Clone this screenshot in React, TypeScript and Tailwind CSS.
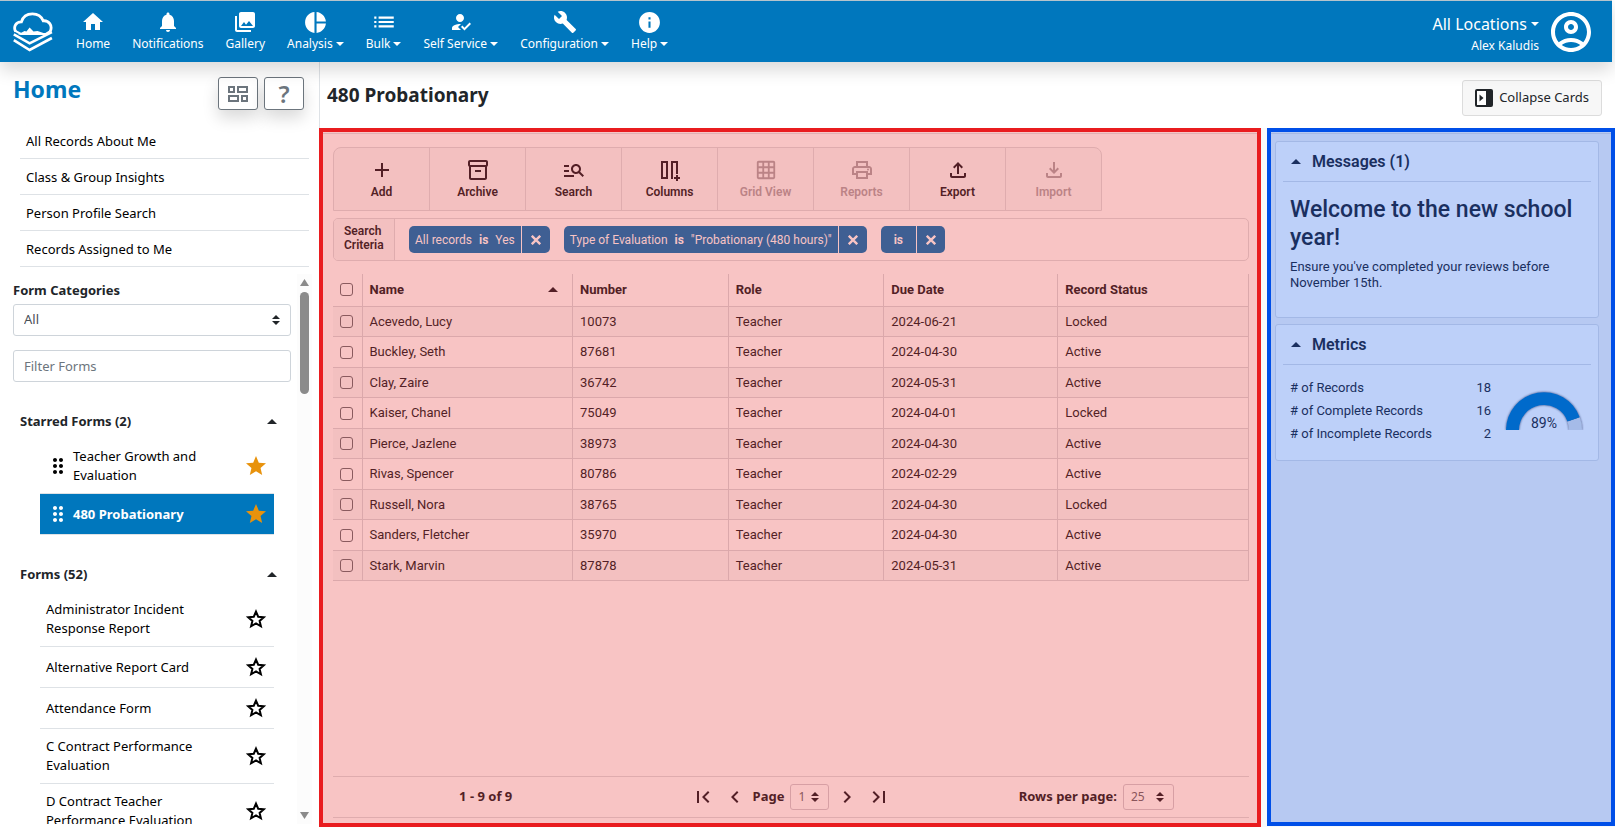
import type { ReactNode } from "react";
import {
  MdAdd,
  MdBuild,
  MdChevronLeft,
  MdChevronRight,
  MdDragIndicator,
  MdFirstPage,
  MdGridOn,
  MdHome,
  MdHowToReg,
  MdInfo,
  MdLastPage,
  MdList,
  MdManageSearch,
  MdNotifications,
  MdOutlineAccountCircle,
  MdOutlineFileDownload,
  MdOutlineFileUpload,
  MdOutlineInventory2,
  MdOutlinePrint,
  MdPhotoLibrary,
  MdPieChart,
  MdStar,
} from "react-icons/md";

const navItems = [
  { label: "Home", icon: <MdHome size={24} />, menu: false },
  { label: "Notifications", icon: <MdNotifications size={24} />, menu: false },
  { label: "Gallery", icon: <MdPhotoLibrary size={24} />, menu: false },
  { label: "Analysis", icon: <MdPieChart size={25} />, menu: true },
  { label: "Bulk", icon: <MdList size={26} />, menu: true },
  { label: "Self Service", icon: <MdHowToReg size={24} />, menu: true },
  { label: "Configuration", icon: <MdBuild size={24} />, menu: true },
  { label: "Help", icon: <MdInfo size={25} />, menu: true },
];

const quickLinks = [
  "All Records About Me",
  "Class & Group Insights",
  "Person Profile Search",
  "Records Assigned to Me",
];

const forms = [
  "Administrator Incident Response Report",
  "Alternative Report Card",
  "Attendance Form",
  "C Contract Performance Evaluation",
  "D Contract Teacher Performance Evaluation",
];

const records = [
  { name: "Acevedo, Lucy", number: "10073", role: "Teacher", due: "2024-06-21", status: "Locked" },
  { name: "Buckley, Seth", number: "87681", role: "Teacher", due: "2024-04-30", status: "Active" },
  { name: "Clay, Zaire", number: "36742", role: "Teacher", due: "2024-05-31", status: "Active" },
  { name: "Kaiser, Chanel", number: "75049", role: "Teacher", due: "2024-04-01", status: "Locked" },
  { name: "Pierce, Jazlene", number: "38973", role: "Teacher", due: "2024-04-30", status: "Active" },
  { name: "Rivas, Spencer", number: "80786", role: "Teacher", due: "2024-02-29", status: "Active" },
  { name: "Russell, Nora", number: "38765", role: "Teacher", due: "2024-04-30", status: "Locked" },
  { name: "Sanders, Fletcher", number: "35970", role: "Teacher", due: "2024-04-30", status: "Active" },
  { name: "Stark, Marvin", number: "87878", role: "Teacher", due: "2024-05-31", status: "Active" },
];

const metrics = [
  { label: "# of Records", value: 18 },
  { label: "# of Complete Records", value: 16 },
  { label: "# of Incomplete Records", value: 2 },
];

const Logo = () => (
  <svg viewBox="0 0 40 40" className="h-10 w-10" fill="none" stroke="white" strokeWidth="2.8">
    <path d="M2.6 19.5C0 14.5 3.2 9.6 8.4 9.8C10 4.4 14.6 1.8 19.4 1.8C24.6 1.8 28.6 4.6 30.2 8.8C35.6 8.2 40 13.6 37.2 19.3" />
    <path d="M2.2 18.8L8 22H32.5L37.6 18.8" strokeWidth="2" />
    <path d="M5 22.4L11.5 19L13.5 19.4L16.6 15.6L20.5 19.4L24.5 19L35 22.4Z" fill="white" stroke="none" />
    <path d="M0.8 22.4L16.6 31.4L38.9 20.2" strokeWidth="2.6" />
    <path d="M0.8 28.2L16.6 38L38.9 26" strokeWidth="2.6" />
  </svg>
);

const BoardIcon = () => (
  <svg viewBox="0 0 22 18" className="h-[18px] w-[22px]" fill="none" stroke="currentColor" strokeWidth="2">
    <path d="M2 2h5v5H2zM11 2h9v5h-9zM2 11h9v5H2zM15 11h5v5h-5z" />
  </svg>
);

const ColumnsIcon = () => (
  <svg viewBox="0 0 24 24" className="h-6 w-6" fill="none" stroke="currentColor" strokeWidth="2">
    <path d="M4 4h5v16H4zM14 21V4h5v12M16 20h6M19 17v6" />
  </svg>
);

const CollapseIcon = () => (
  <svg viewBox="0 0 18 18" className="h-[18px] w-[18px]">
    <rect width="18" height="18" rx="2" fill="#212529" />
    <path d="M2 2h9v14H2z" fill="white" />
    <path d="M4.5 5.5l4 3.5-4 3.5z" fill="#212529" />
  </svg>
);

const StarOutline = () => (
  <svg viewBox="0 0 24 24" className="h-6 w-6" fill="none" stroke="currentColor" strokeWidth="2">
    <path d="M12 4.6L14.2 9.7L19.8 10.2L15.6 13.9L16.9 19.3L12 16.4L7.1 19.3L8.4 13.9L4.2 10.2L9.8 9.7Z" />
  </svg>
);

const CloseIcon = () => (
  <svg viewBox="0 0 10 10" className="h-[10px] w-[10px]" stroke="currentColor" strokeWidth="2.4">
    <path d="M0.8 0.8l8.4 8.4M9.2 0.8L0.8 9.2" />
  </svg>
);

const CaretUp = () => (
  <svg viewBox="0 0 10 5" className="h-[5px] w-[10px]" fill="currentColor">
    <path d="M0 5L5 0L10 5Z" />
  </svg>
);

const CaretDown = () => (
  <svg viewBox="0 0 8 4" className="h-1 w-2" fill="currentColor">
    <path d="M0 0h8L4 4Z" />
  </svg>
);

// The up/down arrows at the right end of a drop-down
const SelectArrows = () => (
  <svg viewBox="0 0 8 10" className="h-[10px] w-2" fill="currentColor">
    <path d="M0 4L4 0L8 4ZM0 6h8L4 10Z" />
  </svg>
);

const toolbar = [
  { label: "Add", icon: <MdAdd size={24} />, disabled: false },
  { label: "Archive", icon: <MdOutlineInventory2 size={24} />, disabled: false },
  { label: "Search", icon: <MdManageSearch size={24} />, disabled: false },
  { label: "Columns", icon: <ColumnsIcon />, disabled: false },
  { label: "Grid View", icon: <MdGridOn size={22} />, disabled: true },
  { label: "Reports", icon: <MdOutlinePrint size={24} />, disabled: true },
  { label: "Export", icon: <MdOutlineFileUpload size={24} />, disabled: false },
  { label: "Import", icon: <MdOutlineFileDownload size={24} />, disabled: true },
];

const Chip = ({ children }: { children: ReactNode }) => (
  <div className="flex h-[27px] overflow-hidden rounded-[5px] bg-[#3f5f93] text-xs text-[#f8c4c4]">
    <span className="flex items-center gap-[7px] px-[6px]">{children}</span>
    <button type="button" aria-label="Remove" className="flex w-[29px] items-center justify-center border-l border-[#f8c4c4]">
      <CloseIcon />
    </button>
  </div>
);

const Checkbox = ({ label }: { label: string }) => (
  <input
    type="checkbox"
    aria-label={label}
    className="block h-[13px] w-[13px] appearance-none rounded-[3px] border border-[#8a5a5e]"
  />
);

const Header = () => (
  <header className="relative z-10 mr-[3px] flex h-[62px] shrink-0 items-center border-t border-[#b5c4cc] bg-[#0077bd] pl-[13px] text-white shadow-[0_8px_16px_rgba(0,0,0,0.15)]">
    <Logo />
    <nav className="ml-3 flex pt-px">
      {navItems.map((item) => (
        <a key={item.label} href="#" className="flex flex-col items-center px-[11px] text-xs leading-5">
          <span className="flex h-6 items-center">{item.icon}</span>
          <span className="flex items-center gap-[3px]">
            {item.label}
            {item.menu && <CaretDown />}
          </span>
        </a>
      ))}
    </nav>
    <div className="ml-auto flex items-center gap-2 pr-[17px]">
      <div className="flex flex-col items-end pt-1">
        <button type="button" className="flex items-center gap-1 text-base leading-6">
          All Locations
          <CaretDown />
        </button>
        <span className="text-xs leading-5">Alex Kaludis</span>
      </div>
      <MdOutlineAccountCircle size={48} />
    </div>
  </header>
);

const Sidebar = () => (
  <aside className="flex w-[319px] shrink-0 flex-col pb-[6px]">
    <div className="flex items-start justify-between pt-[15px] pr-[15px] pl-[13px]">
      <h1 className="text-[23px] leading-6 font-bold text-[#0077bd]">Home</h1>
      <div className="flex gap-[6px]">
        <button type="button" aria-label="Layout" className="flex h-[33px] w-10 items-center justify-center rounded-[3px] border border-[#6c757d] bg-white text-[#6c757d] shadow-[0_8px_16px_rgba(0,0,0,0.15)]">
          <BoardIcon />
        </button>
        <button type="button" className="flex h-[33px] w-10 items-center justify-center rounded-[3px] border border-[#6c757d] bg-white text-2xl font-semibold text-[#6c757d] shadow-[0_8px_16px_rgba(0,0,0,0.15)]">
          ?
        </button>
      </div>
    </div>
    <ul className="mt-[13px] mr-[10px] ml-5">
      {quickLinks.map((link) => (
        <li key={link} className="border-b border-[#dee2e6]">
          <a href="#" className="block px-[6px] pt-[2px] text-[13px] leading-[33px] text-black">{link}</a>
        </li>
      ))}
    </ul>
    <div className="mt-[7px] flex min-h-0 flex-1">
      <div className="flex-1 overflow-hidden pr-[6px] pl-[13px] text-[#212529]">
        <label htmlFor="category" className="block pt-[6px] text-[13px] leading-5 font-bold">Form Categories</label>
        <div className="relative mt-1">
          <select id="category" className="h-8 w-full appearance-none rounded-[3px] border border-[#ced4da] bg-white px-[10px] text-[13px] text-[#495057]">
            <option>All</option>
          </select>
          <span className="pointer-events-none absolute top-[11px] right-[11px]"><SelectArrows /></span>
        </div>
        <input
          type="text"
          aria-label="Filter Forms"
          placeholder="Filter Forms"
          className="mt-[14px] h-8 w-full rounded-[3px] border border-[#ced4da] px-[10px] text-[13px] placeholder:text-[#6c757d]"
        />
        <h2 className="mt-[29px] flex items-center justify-between pr-[14px] pl-[7px] text-[13px] leading-5 font-bold">
          Starred Forms (2)
          <CaretUp />
        </h2>
        <ul className="mt-2 mr-[17px] ml-[27px] text-[13px] leading-[19px] text-black">
          <li className="flex items-center border-b border-[#dee2e6] py-2 pr-[6px] pl-[6px]">
            <MdDragIndicator size={24} className="shrink-0" />
            <a href="#" className="ml-[3px] w-[150px]">Teacher Growth and Evaluation</a>
            <button type="button" aria-label="Unstar" className="ml-auto"><MdStar size={24} color="#e8920c" /></button>
          </li>
          <li className="flex items-center border-b border-[#dee2e6] bg-[#0077bd] py-2 pr-[6px] pl-[6px] text-white">
            <MdDragIndicator size={24} className="shrink-0" />
            <a href="#" className="ml-[3px] font-bold">480 Probationary</a>
            <button type="button" aria-label="Unstar" className="ml-auto"><MdStar size={24} color="#e8920c" /></button>
          </li>
        </ul>
        <h2 className="mt-[29px] flex items-center justify-between pr-[14px] pl-[7px] text-[13px] leading-5 font-bold">
          Forms (52)
          <CaretUp />
        </h2>
        <ul className="mt-2 mr-[17px] ml-[27px] text-[13px] leading-[19px] text-black">
          {forms.map((form) => (
            <li key={form} className="flex items-center border-b border-[#dee2e6] py-2 pr-[6px] pl-[6px]">
              <a href="#" className="w-[165px]">{form}</a>
              <button type="button" aria-label="Star" className="ml-auto"><StarOutline /></button>
            </li>
          ))}
        </ul>
      </div>
      <div className="mr-[7px] flex w-[15px] flex-col items-center bg-[#fcfcfc] py-[5px] text-[#8b8b8b]">
        <svg viewBox="0 0 9 7" className="h-[7px] w-[9px]" fill="currentColor"><path d="M4.5 0L9 7H0Z" /></svg>
        <div className="mt-[6px] h-[102px] w-[9px] rounded-full bg-[#8b8b8b]" />
        <svg viewBox="0 0 9 7" className="mt-auto h-[7px] w-[9px]" fill="currentColor"><path d="M4.5 7L9 0H0Z" /></svg>
      </div>
    </div>
  </aside>
);

const RecordsPanel = () => (
  <section className="flex min-w-0 flex-1 flex-col border-4 border-[#e91c1f] bg-[#f8c4c4] pb-[5px] font-[Roboto,sans-serif] text-[#531f26]">
    <div className="mt-px border-t border-[#dfb0b3]" />
    <div className="flex flex-1 flex-col pt-[13px] pr-2 pl-[10px]">
      <div className="flex self-start overflow-hidden rounded-t-lg border border-[#dfacae] bg-[#f3c0c0]">
        {toolbar.map((tool) => (
          <button
            key={tool.label}
            type="button"
            disabled={tool.disabled}
            className="flex h-[62px] w-24 flex-col items-center border-r border-[#dfacae] pt-[10px] text-xs leading-5 font-semibold last:w-[95px] last:border-r-0 disabled:text-[#bb8386]"
          >
            <span className="flex h-6 items-center">{tool.icon}</span>
            {tool.label}
          </button>
        ))}
      </div>
      <div className="mt-[7px] flex h-[43px] overflow-hidden rounded-[5px] border border-[#dfacae]">
        <div className="flex w-[61px] items-center border-r border-[#dfacae] bg-[#f3c0c0] pb-1 pl-[10px] text-xs leading-[14px] font-semibold">
          Search
          <br />
          Criteria
        </div>
        <div className="flex items-center gap-[14px] pl-[14px]">
          <Chip>All records <b>is</b> Yes</Chip>
          <Chip>Type of Evaluation <b>is</b> "Probationary (480 hours)"</Chip>
          <Chip><b className="px-[7px]">is</b></Chip>
        </div>
      </div>
      <table className="mt-[13px] w-full table-fixed border-collapse text-left text-[13px]">
        <colgroup>
          <col className="w-[29px]" />
          <col className="w-[23%]" />
          <col className="w-[17%]" />
          <col className="w-[17%]" />
          <col className="w-[19%]" />
          <col />
        </colgroup>
        <thead>
          <tr className="h-8 border-b border-[#dba8ab] *:border-r *:border-[#dba8ab] *:px-[7px]">
            <th><Checkbox label="Select all" /></th>
            <th className="font-bold">
              <span className="flex items-center justify-between pr-[7px]">Name <CaretUp /></span>
            </th>
            <th className="font-bold">Number</th>
            <th className="font-bold">Role</th>
            <th className="font-bold">Due Date</th>
            <th className="font-bold">Record Status</th>
          </tr>
        </thead>
        <tbody>
          {records.map((record) => (
            <tr
              key={record.number}
              className="h-[30px] border-b border-[#dba8ab] *:border-r *:border-[#dba8ab] *:px-[7px] *:pt-px odd:bg-[#f3c0c0] even:h-[31px]"
            >
              <td><Checkbox label={record.name} /></td>
              <td>{record.name}</td>
              <td>{record.number}</td>
              <td>{record.role}</td>
              <td>{record.due}</td>
              <td>{record.status}</td>
            </tr>
          ))}
        </tbody>
      </table>
      <footer className="mt-auto grid h-[42px] grid-cols-3 border-y border-[#dfacae] font-['Noto_Sans',sans-serif] text-[13px] font-bold">
        <div className="flex items-center justify-center">1 - 9 of 9</div>
        <div className="flex items-center justify-center">
          <button type="button" aria-label="First page" className="mr-2"><MdFirstPage size={24} /></button>
          <button type="button" aria-label="Previous page" className="mr-[6px]"><MdChevronLeft size={24} /></button>
          <label htmlFor="page">Page</label>
          <div className="relative mx-[6px]">
            <select id="page" className="block h-[26px] w-[39px] appearance-none rounded-[3px] border border-[#d79fa4] px-[7px] text-xs font-normal text-[#8a555b]">
              <option>1</option>
            </select>
            <span className="pointer-events-none absolute top-2 right-[10px]"><SelectArrows /></span>
          </div>
          <button type="button" aria-label="Next page" className="mr-2"><MdChevronRight size={24} /></button>
          <button type="button" aria-label="Last page"><MdLastPage size={24} /></button>
        </div>
        <div className="flex items-center justify-center">
          <label htmlFor="rows">Rows per page:</label>
          <div className="relative ml-[6px]">
            <select id="rows" className="block h-[26px] w-[51px] appearance-none rounded-[3px] border border-[#d79fa4] px-[7px] text-xs font-normal text-[#8a555b]">
              <option>25</option>
            </select>
            <span className="pointer-events-none absolute top-2 right-[10px]"><SelectArrows /></span>
          </div>
        </div>
      </footer>
    </div>
  </section>
);

const Gauge = () => (
  <svg viewBox="0 0 84 44" className="h-11 w-[84px]">
    <defs>
      <filter id="gauge-shadow" x="-10%" y="-10%" width="120%" height="120%">
        <feDropShadow dx="0" dy="0" stdDeviation="1.2" floodColor="#1b2f63" floodOpacity="0.9" />
      </filter>
    </defs>
    <g filter="url(#gauge-shadow)">
      <path d="M77.7 31.2A38 38 0 0 1 80 44H67A25 25 0 0 0 65.5 35.4Z" fill="#a5bbe8" />
      <path d="M4 44A38 38 0 0 1 77.7 31.2L65.5 35.4A25 25 0 0 0 17 44Z" fill="#006bcb" />
    </g>
    <text x="42" y="42" textAnchor="middle" fontSize="14" fill="#1a2f60">89%</text>
  </svg>
);

const CardsPanel = () => (
  <aside className="mb-px w-[348px] shrink-0 border-4 border-[#004fe8] bg-[#b7c9f2] font-[Roboto,sans-serif] text-[#1a2f60]">
    <div className="mt-px border-t border-[#a5b8e4]" />
    <div className="flex flex-col gap-[6px] pt-[7px] pr-3 pl-1">
      <section className="h-[177px] rounded-[3px] border border-[#a3b8e6] bg-[#bdd0f9] px-[7px]">
        <h2 className="flex h-10 items-center gap-[11px] border-b border-[#a3b8e6] pl-2 text-base font-semibold">
          <CaretUp />
          Messages (1)
        </h2>
        <div className="px-[7px]">
          <h3 className="mt-[14px] text-[23px] leading-7 font-medium">Welcome to the new school year!</h3>
          <p className="mt-[7px] text-[13px] leading-4">Ensure you've completed your reviews before November 15th.</p>
        </div>
      </section>
      <section className="h-[137px] rounded-[3px] border border-[#a3b8e6] bg-[#bdd0f9] px-[7px]">
        <h2 className="flex h-10 items-center gap-[11px] border-b border-[#a3b8e6] pl-2 text-base font-semibold">
          <CaretUp />
          Metrics
        </h2>
        <div className="flex items-start justify-between pt-[11px] pr-[5px] pl-[7px]">
          <dl className="w-[201px] text-[13px] leading-[23px]">
            {metrics.map((metric) => (
              <div key={metric.label} className="flex justify-between">
                <dt>{metric.label}</dt>
                <dd>{metric.value}</dd>
              </div>
            ))}
          </dl>
          <div className="mt-[10px]">
            <Gauge />
          </div>
        </div>
      </section>
    </div>
  </aside>
);

const App = () => {
  return (
    <div className="flex h-screen flex-col bg-white font-['Noto_Sans',sans-serif] text-[#212529]">
      <Header />
      <div className="flex min-h-0 flex-1">
        <Sidebar />
        <main className="flex min-w-0 flex-1 flex-col pb-[3px]">
          <div className="flex h-[66px] shrink-0 items-start justify-between border-l border-[#dee2e6] pt-[18px] pr-[13px] pl-[7px]">
            <h2 className="text-[19px] leading-[30px] font-bold">480 Probationary</h2>
            <button type="button" className="flex h-9 items-center gap-[6px] rounded-[3px] border border-[#dcdcdc] bg-[#f7f7f7] px-3 text-[13px]">
              <CollapseIcon />
              Collapse Cards
            </button>
          </div>
          <div className="flex min-h-0 flex-1 gap-[6px] bg-[#f8f9fa]">
            <RecordsPanel />
            <CardsPanel />
          </div>
        </main>
      </div>
    </div>
  );
};

export default App;
